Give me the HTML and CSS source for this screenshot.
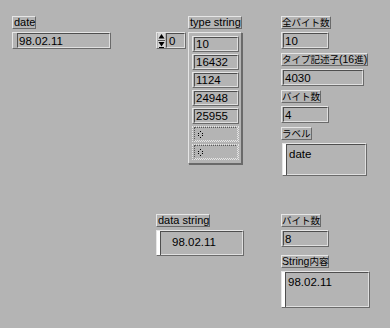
FILE: index.html
```html
<!DOCTYPE html>
<html lang="ja">
	<head>
		<meta charset="UTF-8" />
		<title>type string</title>
		<link rel="stylesheet" href="styles.css">
	</head>
	<body>
		<div class="panel">
			<div class="cell cell-date">
				<div class="group">
					<div class="label">date</div>
					<div class="field field-date"><div class="in">98.02.11</div></div>
				</div>
			</div>

			<div class="cell cell-array">
				<div class="index">
					<svg class="arrows" width="7" height="15" viewBox="0 0 7 15">
						<rect x="0" y="0" width="7" height="15" fill="#d6d6d6" />
						<polygon points="3.5,1 0.5,5.5 6.5,5.5" fill="#000" />
						<rect x="0" y="7" width="7" height="1" fill="#555" />
						<polygon points="0.5,9 6.5,9 3.5,13.5" fill="#000" />
						<rect x="1" y="14" width="5" height="1" fill="#000" />
					</svg>
					<div class="in">0</div>
				</div>
				<div class="group">
					<div class="label">type string</div>
					<div class="array">
						<div class="elem"><div class="in">10</div></div>
						<div class="elem"><div class="in">16432</div></div>
						<div class="elem"><div class="in">1124</div></div>
						<div class="elem"><div class="in">24948</div></div>
						<div class="elem"><div class="in">25955</div></div>
						<div class="elem empty">
							<div class="in">
								<svg width="5" height="7" viewBox="0 0 5 7">
									<rect x="2" y="0" width="1" height="1" fill="#000" />
									<rect x="0" y="2" width="1" height="1" fill="#000" />
									<rect x="4" y="2" width="1" height="1" fill="#000" />
									<rect x="0" y="4" width="1" height="1" fill="#000" />
									<rect x="4" y="4" width="1" height="1" fill="#000" />
									<rect x="2" y="6" width="1" height="1" fill="#000" />
								</svg>
							</div>
						</div>
						<div class="elem empty">
							<div class="in">
								<svg width="5" height="7" viewBox="0 0 5 7">
									<rect x="2" y="0" width="1" height="1" fill="#000" />
									<rect x="0" y="2" width="1" height="1" fill="#000" />
									<rect x="4" y="2" width="1" height="1" fill="#000" />
									<rect x="0" y="4" width="1" height="1" fill="#000" />
									<rect x="4" y="4" width="1" height="1" fill="#000" />
									<rect x="2" y="6" width="1" height="1" fill="#000" />
								</svg>
							</div>
						</div>
					</div>
				</div>
			</div>

			<div class="cell cell-info">
				<div class="group">
					<div class="label jp">全バイト数</div>
					<div class="field w48"><div class="in">10</div></div>
				</div>
				<div class="group">
					<div class="label jp">タイプ記述子<span class="num">(16</span>進<span class="num">)</span></div>
					<div class="field w83"><div class="in">4030</div></div>
				</div>
				<div class="group">
					<div class="label jp">バイト数</div>
					<div class="field w48"><div class="in">4</div></div>
				</div>
				<div class="group">
					<div class="label jp">ラベル</div>
					<div class="sbox sbox-label">
						<div class="strip"></div>
						<div class="stext">date</div>
					</div>
				</div>
			</div>

			<div class="cell cell-dstr">
				<div class="group">
					<div class="label">data string</div>
					<div class="sbox sbox-data">
						<div class="strip"></div>
						<div class="stext indent">98.02.11</div>
					</div>
				</div>
			</div>

			<div class="cell cell-info cell-info2">
				<div class="group">
					<div class="label jp">バイト数</div>
					<div class="field w48"><div class="in">8</div></div>
				</div>
				<div class="group">
					<div class="label jp"><span class="num">String</span>内容</div>
					<div class="sbox sbox-content">
						<div class="strip"></div>
						<div class="stext">98.02.11</div>
					</div>
				</div>
			</div>
		</div>
	</body>
</html>
```

FILE: styles.css
```css
body {
	margin: 0;
	background-color: #b4b4b4;
	font-family: "Liberation Sans", "Noto Sans CJK JP", sans-serif;
	color: #000;
}
.panel {
	width: 390px;
	height: 328px;
	box-sizing: border-box;
	padding: 16px 0 0 12px;
	display: grid;
	grid-template-columns: 143px 126px 1fr;
	grid-template-rows: 198px auto;
	align-items: start;
}
.cell-array {
	display: flex;
	gap: 2px;
	padding-left: 1px;
}
.cell-dstr {
	grid-column: 2;
	grid-row: 2;
	padding-left: 1px;
}
.cell-info {
	display: flex;
	flex-direction: column;
	gap: 4px;
}
.cell-info2 {
	grid-column: 3;
	grid-row: 2;
	gap: 8px;
}
.group {
	display: flex;
	flex-direction: column;
	align-items: flex-start;
	gap: 3px;
}
.label {
	height: 13px;
	box-sizing: border-box;
	padding: 0 0 0 1px;
	font-size: 11px;
	line-height: 11px;
	white-space: nowrap;
	border: 1px solid;
	border-color: #e6e6e6 #6a6a6a #6a6a6a #e6e6e6;
}
.label.jp {
	font-size: 9.5px;
	line-height: 11px;
	padding: 0;
}
.label .num {
	font-size: 10.5px;
}
.field {
	height: 17px;
	box-sizing: border-box;
	padding-left: 1px;
	border: 1px solid;
	border-color: #e6e6e6 #6a6a6a #6a6a6a #e6e6e6;
}
.field-date {
	width: 99px;
	padding-left: 4px;
}
.w48 {
	width: 48px;
}
.w83 {
	width: 83px;
}
.in {
	height: 100%;
	box-sizing: border-box;
	padding-left: 1px;
	font-size: 11.5px;
	line-height: 14px;
	border: 1px solid;
	border-color: #4e4e4e #e0e0e0 #e0e0e0 #4e4e4e;
	white-space: nowrap;
}
.index {
	width: 30px;
	height: 17px;
	margin-top: 16px;
	box-sizing: border-box;
	display: flex;
	gap: 1px;
	padding-left: 1px;
	border: 1px solid;
	border-color: #e6e6e6 #6a6a6a #6a6a6a #e6e6e6;
}
.index .arrows {
	flex: none;
}
.index .in {
	flex: 1;
	padding-left: 2px;
}
.array {
	width: 54px;
	box-sizing: border-box;
	padding: 3px 2px 3px 3px;
	display: flex;
	flex-direction: column;
	gap: 2px;
	border: 1px solid;
	border-color: #e6e6e6 #6a6a6a #6a6a6a #e6e6e6;
	box-shadow: 1px 1px 0 #6a6a6a;
}
.elem {
	height: 16px;
	box-sizing: border-box;
	padding-left: 1px;
	border: 1px solid;
	border-color: #e6e6e6 #6a6a6a #6a6a6a #e6e6e6;
}
.elem .in {
	line-height: 13px;
}
.elem.empty {
	border: 1px dotted #e6e6e6;
}
.elem.empty .in {
	border: 1px dotted #5a5a5a;
	border-right-color: #e6e6e6;
	border-bottom-color: #e6e6e6;
	padding: 3px 0 0 3px;
}
.elem.empty svg {
	display: block;
}
.sbox {
	display: flex;
	box-sizing: border-box;
	border: 1px solid;
	border-color: #e6e6e6 #6a6a6a #6a6a6a #e6e6e6;
}
.sbox-label {
	width: 85px;
	height: 33px;
	margin-left: 1px;
}
.sbox-data {
	width: 88px;
	height: 26px;
}
.sbox-content {
	width: 89px;
	height: 37px;
}
.strip {
	width: 3px;
	background-color: #ffffff;
	border-right: 1px solid #4e4e4e;
	flex: none;
}
.stext {
	flex: 1;
	padding: 2px 0 0 2px;
	font-size: 11.5px;
	line-height: 14px;
	border-top: 1px solid #4e4e4e;
	border-right: 1px solid #e0e0e0;
	border-bottom: 1px solid #e0e0e0;
}
.stext.indent {
	padding-left: 11px;
	padding-top: 3px;
}
```
